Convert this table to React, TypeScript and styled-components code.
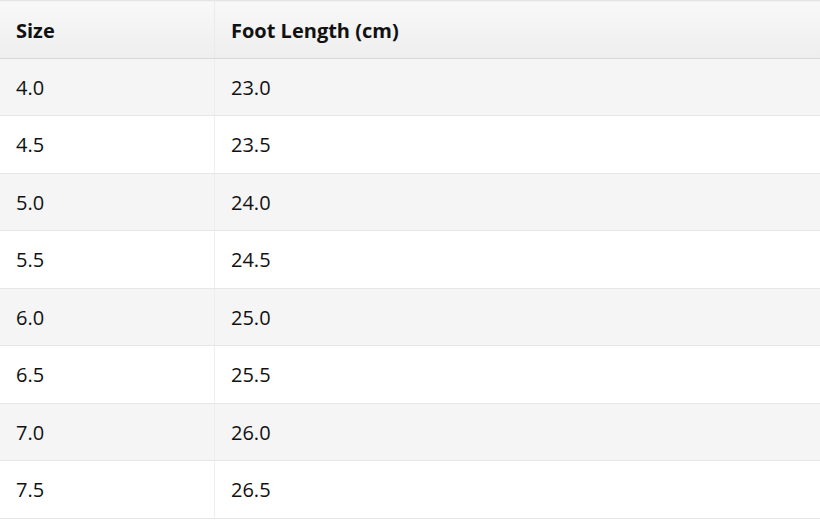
import React from "react";
import styled, { createGlobalStyle } from "styled-components";

const GlobalStyle = createGlobalStyle`
  body {
    margin: 0;
    background: #ffffff;
    font-family: "Open Sans", "Noto Sans", "Liberation Sans", sans-serif;
    color: #111111;
  }
`;

const Table = styled.table`
  width: 100%;
  border-collapse: collapse;
  font-size: 20px;
  line-height: 25.5px;
  border-top: 1px solid #e4e4e4;
`;

const HeadCell = styled.th<{ $first?: boolean }>`
  text-align: left;
  font-weight: 700;
  padding: 16.5px 16px 14.5px;
  background: linear-gradient(#f8f8f8, #eeeeee);
  border-bottom: 1px solid #d9d9d9;
  border-right: ${(p) => (p.$first ? "1px solid #eaeaea" : "none")};
  width: ${(p) => (p.$first ? "182px" : "auto")};
`;

const Row = styled.tr<{ $striped: boolean }>`
  background: ${(p) => (p.$striped ? "#f5f5f5" : "#ffffff")};
`;

const Cell = styled.td<{ $first?: boolean }>`
  padding: 16px 16px 15px;
  border-bottom: 1px solid #e6e6e6;
  border-right: ${(p) => (p.$first ? "1px solid #eeeeee" : "none")};
`;

const sizes = [
  ["4.0", "23.0"],
  ["4.5", "23.5"],
  ["5.0", "24.0"],
  ["5.5", "24.5"],
  ["6.0", "25.0"],
  ["6.5", "25.5"],
  ["7.0", "26.0"],
  ["7.5", "26.5"],
];

export default function App() {
  return (
    <>
      <GlobalStyle />
      <Table>
        <thead>
          <tr>
            <HeadCell $first>Size</HeadCell>
            <HeadCell>Foot Length (cm)</HeadCell>
          </tr>
        </thead>
        <tbody>
          {sizes.map(([size, length], i) => (
            <Row key={size} $striped={i % 2 === 0}>
              <Cell $first>{size}</Cell>
              <Cell>{length}</Cell>
            </Row>
          ))}
        </tbody>
      </Table>
    </>
  );
}
